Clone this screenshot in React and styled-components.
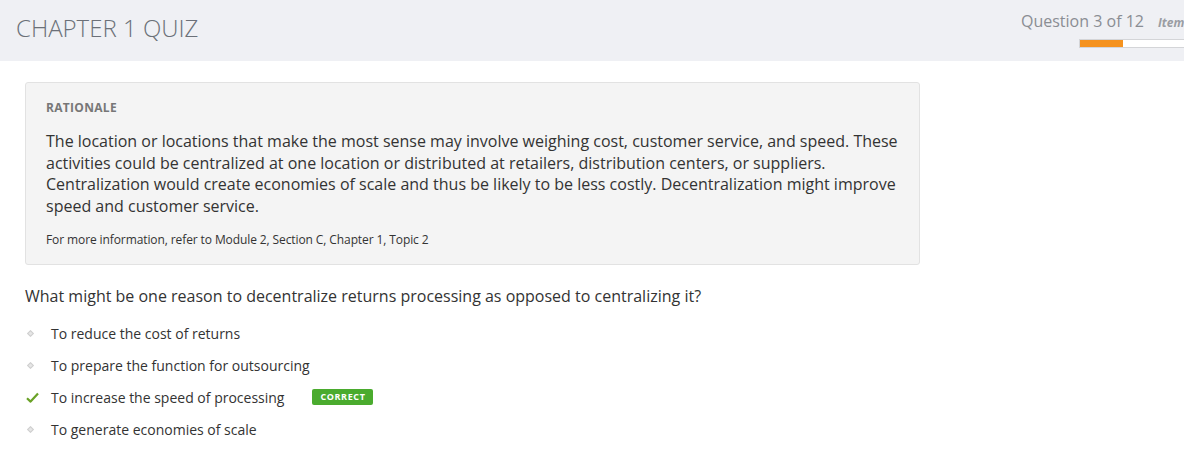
import React from 'react';
import styled, { createGlobalStyle } from 'styled-components';

const GlobalStyle = createGlobalStyle`
    html, body {
        margin: 0;
        padding: 0;
        background: #fff;
        overflow-x: hidden;
    }
    body {
        font-family: "Open Sans", "Noto Sans", sans-serif;
        color: #333;
    }
`;

/** Styles */
const Header = styled.header`
    display: flex;
    align-items: flex-start;
    justify-content: space-between;
    height: 61px;
    background-color: #eff0f4;
`;
const Title = styled.h1`
    margin: 0;
    padding: 11px 0 0 16px;
    font-size: 24px;
    font-weight: 300;
    line-height: 34px;
    color: #6b7078;
`;
const Progress = styled.div`
    display: flex;
    flex-direction: column;
    width: 163px;
    flex-shrink: 0;
    overflow: hidden;
    padding-top: 10px;
`;
const ProgressRow = styled.div`
    display: flex;
    align-items: baseline;
    white-space: nowrap;
    gap: 14px;
`;
const Count = styled.span`
    font-size: 16px;
    line-height: 22px;
    color: #8a8d93;
`;
const Item = styled.span`
    font-size: 12px;
    font-weight: 700;
    font-style: italic;
    color: #9a9da3;
`;
const Bar = styled.div`
    margin: 7px 0 0 58px;
    width: 130px;
    height: 7px;
    background: #fff;
    border: 1px solid #d4d5d8;
    flex-shrink: 0;
`;
const BarFill = styled.div`
    height: 100%;
    background: #f5921e;
`;

const Main = styled.main`
    padding: 21px 25px 0;
`;
const Rationale = styled.section`
    width: 895px;
    box-sizing: border-box;
    padding: 17px 20px 16px 20px;
    background: #f4f4f4;
    border: 1px solid #e2e2e2;
    border-radius: 3px;
`;
const Label = styled.div`
    font-size: 12px;
    font-weight: 700;
    line-height: 16px;
    letter-spacing: 0.3px;
    color: #777;
    text-transform: uppercase;
`;
const Body = styled.p`
    margin: 15px 0 0;
    font-size: 16px;
    line-height: 21.5px;
    color: #333;
`;
const Note = styled.p`
    margin: 15px 0 0;
    font-size: 12px;
    line-height: 16px;
    letter-spacing: -0.1px;
    color: #333;
`;
const Question = styled.p`
    margin: 20px 0 10px;
    font-size: 16px;
    line-height: 22px;
    color: #333;
`;
const Options = styled.ul`
    list-style: none;
    margin: 0;
    padding: 0;
`;
const Option = styled.li`
    display: flex;
    align-items: center;
    height: 32px;
    font-size: 14px;
    color: #333;
`;
const Marker = styled.span`
    display: flex;
    align-items: center;
    justify-content: center;
    width: 14px;
    margin-right: 12px;
`;
const Diamond = styled.span`
    display: block;
    width: 3px;
    height: 3px;
    margin-left: -3px;
    border: 1px solid #cfcfcf;
    background: #e6e6e6;
    transform: rotate(45deg);
`;
const Badge = styled.span`
    margin-left: 28px;
    padding: 0 8px;
    height: 16px;
    line-height: 16px;
    font-size: 9px;
    font-weight: 700;
    letter-spacing: 0.6px;
    color: #fff;
    background: #4aab2e;
    border-radius: 2px;
`;

const Check = () => (
    <svg width="13" height="11" viewBox="0 0 13 11">
        <path d="M1 6.2 L4.6 9.6 L12 1.4" fill="none" stroke="#6aa227" strokeWidth="2.2" strokeLinejoin="round" />
    </svg>
);

const answers = [
    { text: 'To reduce the cost of returns' },
    { text: 'To prepare the function for outsourcing' },
    { text: 'To increase the speed of processing', correct: true },
    { text: 'To generate economies of scale' },
];

/** Render */
const App = () => {
    const current = 3;
    const total = 12;
    return (
        <>
            <GlobalStyle />
            <Header>
                <Title>CHAPTER 1 QUIZ</Title>
                <Progress>
                    <ProgressRow>
                        <Count>Question {current} of {total}</Count>
                        <Item>Item</Item>
                    </ProgressRow>
                    <Bar>
                        <BarFill style={{ width: `${(43 / 130) * 100}%` }} />
                    </Bar>
                </Progress>
            </Header>

            <Main>
                <Rationale>
                    <Label>Rationale</Label>
                    <Body>
                        The location or locations that make the most sense may involve weighing cost, customer service, and speed. These activities could be centralized at one location or distributed at retailers, distribution centers, or suppliers. Centralization would create economies of scale and thus be likely to be less costly. Decentralization might improve speed and customer service.
                    </Body>
                    <Note>For more information, refer to Module 2, Section C, Chapter 1, Topic 2</Note>
                </Rationale>

                <Question>What might be one reason to decentralize returns processing as opposed to centralizing it?</Question>

                <Options>
                    {answers.map((a) => (
                        <Option key={a.text}>
                            <Marker>{a.correct ? <Check /> : <Diamond />}</Marker>
                            {a.text}
                            {a.correct && <Badge>CORRECT</Badge>}
                        </Option>
                    ))}
                </Options>
            </Main>
        </>
    );
};

export default App;
